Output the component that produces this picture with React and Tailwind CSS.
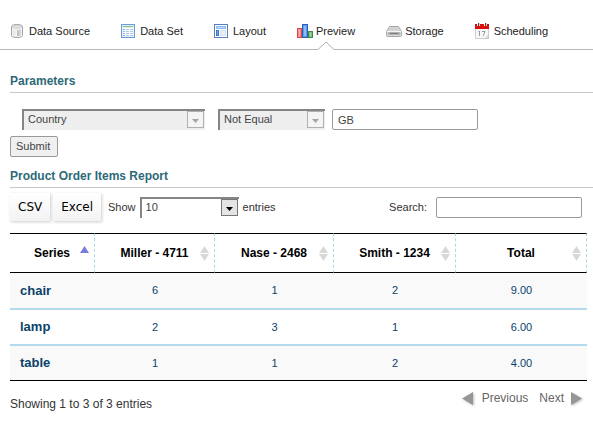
import React from "react";

function DatabaseIcon() {
  return (
    <svg width="16" height="16" viewBox="0 0 16 16" aria-hidden="true">
      <defs>
        <linearGradient id="cyl" x1="0" x2="1">
          <stop offset="0" stopColor="#e6e6e6" />
          <stop offset="0.45" stopColor="#f2f2f2" />
          <stop offset="0.5" stopColor="#bdbdbd" />
          <stop offset="1" stopColor="#dcdcdc" />
        </linearGradient>
      </defs>
      <path d="M1.5 3.5C1.5 0.8 12.5 0.8 12.5 3.5V12.5C12.5 15.2 1.5 15.2 1.5 12.5Z" fill="#f4f4f4" stroke="#a3a3a3" />
      <path d="M3 6.2C5 7.2 9 7.2 11 6.2V12.2C9 13.6 5 13.6 3 12.2Z" fill="url(#cyl)" />
      <ellipse cx="7" cy="3.8" rx="4.8" ry="1.6" fill="#dedede" stroke="#c6c6c6" strokeWidth="0.6" />
    </svg>
  );
}

function TableIcon() {
  return (
    <svg width="16" height="16" viewBox="0 0 16 16" shapeRendering="crispEdges" aria-hidden="true">
      <rect x="0.5" y="1.5" width="13" height="13" fill="#fff" stroke="#6c9ad6" />
      <rect x="1" y="2" width="12" height="12" fill="#e6f0fb" />
      <rect x="2" y="3" width="10" height="1" fill="#7cc47c" />
      <rect x="2" y="5" width="10" height="8" fill="#fff" />
      <path d="M2 6.5h2M2 8.5h2M2 10.5h2M2 12.5h2" stroke="#8db8e8" />
      <path d="M5 6.5h3M5 8.5h3M5 10.5h3M5 12.5h3M9 6.5h3M9 8.5h3M9 10.5h3M9 12.5h3" stroke="#a9c8ec" />
    </svg>
  );
}

function LayoutIcon() {
  return (
    <svg width="16" height="16" viewBox="0 0 16 16" shapeRendering="crispEdges" aria-hidden="true">
      <rect x="0.5" y="1.5" width="13" height="13" fill="#fff" stroke="#5580bd" />
      <rect x="2" y="3" width="10" height="3" fill="#8fbdf0" />
      <rect x="3" y="4" width="8" height="1" fill="#b5d5f7" />
      <rect x="2" y="7" width="3" height="6" fill="#3f78c3" />
      <rect x="3" y="8" width="1" height="4" fill="#6fa3e0" />
      <rect x="6" y="7" width="6" height="6" fill="#d8e1ee" />
      <rect x="7" y="8" width="4" height="4" fill="#e9eef6" />
    </svg>
  );
}

function ChartIcon() {
  return (
    <svg width="16" height="16" viewBox="0 0 16 16" shapeRendering="crispEdges" aria-hidden="true">
      <rect x="0" y="5" width="5" height="10" fill="#d94848" />
      <rect x="1" y="6" width="3" height="8" fill="#f98b8b" />
      <rect x="2" y="7" width="1" height="6" fill="#fbb4b4" />
      <rect x="5" y="1" width="6" height="14" fill="#2b62b8" />
      <rect x="6" y="2" width="4" height="12" fill="#5b9bea" />
      <rect x="7" y="3" width="2" height="10" fill="#8cbcf5" />
      <rect x="11" y="8" width="5" height="7" fill="#3d8a42" />
      <rect x="12" y="9" width="3" height="5" fill="#7fc080" />
      <rect x="13" y="10" width="1" height="3" fill="#a8d9a8" />
    </svg>
  );
}

function DriveIcon() {
  return (
    <svg width="16" height="16" viewBox="0 0 16 16" aria-hidden="true">
      <path d="M3.5 3.5H12.5L15.5 8.5V12.5Q15.5 13.5 14.5 13.5H1.5Q0.5 13.5 0.5 12.5V8.5Z" fill="#d9d9d9" stroke="#a8a8a8" />
      <path d="M4 4H12L14.5 8H1.5Z" fill="#d2d2d2" />
      <path d="M1 8.5H15" stroke="#f6f6f6" />
      <rect x="2" y="9" width="12" height="3" fill="#b3b3b3" />
      <rect x="4" y="10" width="8" height="1" fill="#7d7d7d" />
    </svg>
  );
}

function CalendarIcon() {
  return (
    <svg width="16" height="16" viewBox="0 0 16 16" aria-hidden="true">
      <path d="M0.5 4.5H13.5V15.5H0.5Z" fill="#f7f7f7" stroke="#cfcfcf" />
      <path d="M0 1H14V6H0Z" fill="#d80f0f" />
      <path d="M2 0H5V3H2ZM9 0H12V3H9Z" fill="#fff" />
      <path d="M3 0H4.200V3H3ZM10 0H11.200V3H10Z" fill="#7e3030" />
      <path d="M4.500 8V13M3.500 9L4.500 8M7 8.500H10L8.200 13" stroke="#9b9b9b" fill="none" />
      <path d="M10 15.500L13.500 12V15.500Z" fill="#e2e2e2" stroke="#bdbdbd" strokeWidth="0.6" />
    </svg>
  );
}

const tabs = [
  { label: "Data Source", Icon: DatabaseIcon },
  { label: "Data Set", Icon: TableIcon },
  { label: "Layout", Icon: LayoutIcon },
  { label: "Preview", Icon: ChartIcon, active: true },
  { label: "Storage", Icon: DriveIcon },
  { label: "Scheduling", Icon: CalendarIcon },
];

const columns = [
  { label: "Series", width: "w-[85px]", sorted: true },
  { label: "Miller - 4711", width: "w-[120px]" },
  { label: "Nase - 2468", width: "w-[119px]" },
  { label: "Smith - 1234", width: "w-[122px]" },
  { label: "Total", width: "" },
];

const rows = [
  { name: "chair", values: ["6", "1", "2", "9.00"] },
  { name: "lamp", values: ["2", "3", "1", "6.00"] },
  { name: "table", values: ["1", "1", "2", "4.00"] },
];

const cell = "h-9 border-b-2 border-[#b5d9ee] p-0 group-first:h-[37px] group-last:h-[34px] group-last:border-b-0";

function Tabs() {
  return (
    <nav className="flex h-[50px] items-center gap-[31px] border-b border-[#b8b8b8] pt-[13px] pl-[10px]">
      {tabs.map(({ label, Icon, active }) => (
        <a key={label} href="#" className="relative flex h-full items-center gap-[3px] whitespace-nowrap text-[#222]">
          <Icon />
          {label}
          {active && (
            <svg className="absolute -bottom-px left-1/2 -translate-x-1/2" width="16" height="9" viewBox="0 0 16 9" aria-hidden="true">
              <path d="M0 8.500L8 0.500L16 8.500V9H0Z" fill="#fff" />
              <path d="M0 8.500L8 1L16 8.500" fill="none" stroke="#b0b0b0" />
            </svg>
          )}
        </a>
      ))}
    </nav>
  );
}

function SectionTitle({ children }) {
  return (
    <h2 className="h-[18px] border-b border-[#c8c8c8] text-[12px] font-bold leading-[13px] text-[#2d6a78]">{children}</h2>
  );
}

function SelectBox({ value, label, width, disabled, options = [value] }) {
  return (
    <div className={"relative h-[21px] " + width}>
      <select
        aria-label={label}
        disabled={disabled}
        defaultValue={value}
        className="block size-full appearance-none border-t-2 border-l-2 border-[#858585] bg-white pb-[3px] pl-1 text-[#444] opacity-100 disabled:bg-[#eee]"
      >
        {options.map((o) => (
          <option key={o}>{o}</option>
        ))}
      </select>
      <span
        className={
          "pointer-events-none absolute top-[2px] right-px flex h-[17px] w-[17px] items-center justify-center border " +
          (disabled ? "border-[#b0b0b0] bg-[#f4f4f4] text-[#a5a5a5]" : "border-[#777] bg-[#e4e4e4] text-black")
        }
      >
        <svg width="7" height="4" viewBox="0 0 7 4" className="mt-[3px]" aria-hidden="true">
          <path d="M0 0H7L3.500 4Z" fill="currentColor" />
        </svg>
      </span>
    </div>
  );
}

function ExportButton({ children }) {
  return (
    <button className="h-7 bg-linear-to-b from-white to-[#f3f3f3] px-2 font-['DejaVu_Sans',sans-serif] text-[12px] text-black shadow-[1px_1px_3px_#ccc]">
      {children}
    </button>
  );
}

function SortIcon({ sorted }) {
  return (
    <svg className="absolute top-[11px] right-[5px]" width="9" height="17" viewBox="0 0 9 17" aria-hidden="true">
      {sorted ? (
        <path d="M0 8L4.500 1L9 8Z" fill="#7b7bdc" />
      ) : (
        <path d="M0 8L4.500 1L9 8ZM0 9L4.500 16L9 9Z" fill="#d8d8d8" />
      )}
    </svg>
  );
}

export default function App() {
  return (
    <div className="bg-white pb-2 font-['Liberation_Sans',Arial,sans-serif] text-[11px] text-[#333]">
      <Tabs />
      <main className="pt-[25px] pl-[10px]">
        <SectionTitle>Parameters</SectionTitle>
        <form onSubmit={(e) => e.preventDefault()}>
          <div className="flex pt-4 pl-3">
            <SelectBox value="Country" label="Parameter" width="w-[183px]" disabled />
            <div className="ml-[13px]">
              <SelectBox value="Not Equal" label="Operator" width="w-[107px]" disabled />
            </div>
            <input
              aria-label="Value"
              defaultValue="GB"
              className="ml-[7px] h-[21px] w-[146px] rounded-[2px] border border-[#999] px-[5px] text-[#444]"
            />
          </div>
          <button className="mt-[6px] block h-[21px] w-12 rounded-[2px] border border-[#999] bg-[#f0f0f0] text-left pl-[5px] text-[#444]">
            Submit
          </button>
        </form>

        <div className="pt-[13px]">
          <SectionTitle>Product Order Items Report</SectionTitle>
        </div>

        <div className="pr-[6px]">
          <div className="flex items-center pt-[5px] pr-[5px]">
            <div className="flex gap-[3px]">
              <ExportButton>CSV</ExportButton>
              <ExportButton>Excel</ExportButton>
            </div>
            <div className="ml-[7px] flex items-center gap-1">
              Show
              <SelectBox value="10" label="Entries per page" width="w-[99px]" options={["10", "25", "50", "100"]} />
              entries
            </div>
            <label className="ml-auto flex items-center gap-[9px]">
              Search:
              <input className="h-[21px] w-[146px] rounded-[2px] border border-[#999] px-[5px]" />
            </label>
          </div>

          <table className="mt-3 w-full table-fixed border-separate border-spacing-0 border-b border-black text-center">
            <thead>
              <tr>
                {columns.map((c) => (
                  <th
                    key={c.label}
                    scope="col"
                    className={
                      "relative h-10 border-y border-r border-y-black border-r-[#add8e6] p-0 text-[12px] font-bold text-black [border-right-style:dashed] " +
                      c.width
                    }
                  >
                    {c.label}
                    <SortIcon sorted={c.sorted} />
                  </th>
                ))}
              </tr>
            </thead>
            <tbody className="text-[#0a416a]">
              {rows.map((r) => (
                <tr key={r.name} className="group odd:bg-[#f9f9f9]">
                  <th scope="row" className={cell + " pl-[10px] text-left text-[13px] font-bold"}>
                    {r.name}
                  </th>
                  {r.values.map((v, i) => (
                    <td key={i} className={cell}>
                      {v}
                    </td>
                  ))}
                </tr>
              ))}
            </tbody>
          </table>

          <div className="flex items-start justify-between pt-[9px] pr-[5px] text-[12px]">
            <p className="pt-[6px] leading-4">Showing 1 to 3 of 3 entries</p>
            <div className="flex gap-[11px] leading-4 text-[#666]">
              <button className="flex items-center gap-2">
                <svg width="12" height="13" viewBox="0 0 12 13" className="drop-shadow-[1px_1px_1px_#bbb]" aria-hidden="true">
                  <path d="M11 0V13L0 6.500Z" fill="#969696" />
                </svg>
                Previous
              </button>
              <button className="flex items-center gap-[7px]">
                Next
                <svg width="11" height="13" viewBox="0 0 11 13" className="drop-shadow-[1px_1px_1px_#bbb]" aria-hidden="true">
                  <path d="M0 0V13L11 6.500Z" fill="#969696" />
                </svg>
              </button>
            </div>
          </div>
        </div>
      </main>
    </div>
  );
}
